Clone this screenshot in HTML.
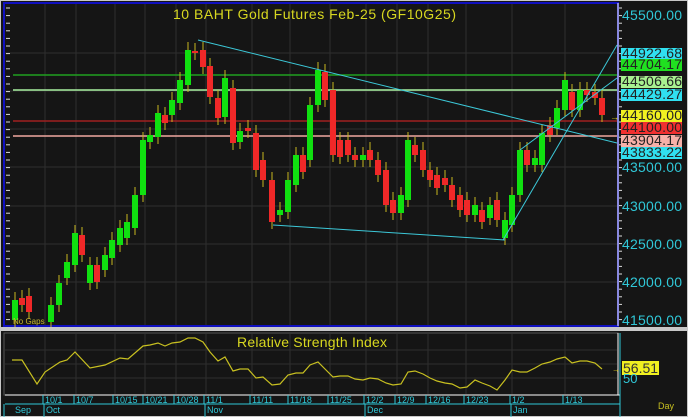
<!DOCTYPE html>
<html><head><style>
body{margin:0;background:#d4d0c8;}
#w{position:relative;width:688px;height:417px;background:#141414;overflow:hidden;font-family:"Liberation Sans",sans-serif;}
svg{position:absolute;left:0;top:0}
</style></head><body><div id="w">
<svg id="s" width="688" height="417" xmlns="http://www.w3.org/2000/svg">
<rect x="0" y="0" width="688" height="417" fill="#151515"/>
<rect x="0.5" y="0.5" width="687" height="416" fill="none" stroke="#c8c8c8"/>
<g id="grid" stroke="#2e2e2e" stroke-width="1"></g>
<rect x="4" y="3" width="614" height="323" fill="none" stroke="#1010c0" stroke-width="2"/>
<line x1="618" y1="3" x2="618" y2="326" stroke="#fff"/>
<g id="hl"></g>
<g id="c"></g>
<g fill="none" stroke="#3cc8d8" stroke-width="1">
<polyline points="198,40 617,143"/>
<polyline points="273,225 505,240"/>
<polyline points="503,240 617,45"/>
<polyline points="520,150 617,78"/>
</g>
<text x="173" y="19" fill="#d8d820" font-size="14" textLength="283" lengthAdjust="spacing">10  BAHT  Gold  Futures  Feb-25  (GF10G25)</text>
<text x="13" y="324" fill="#c8b830" font-size="8">No Gaps</text>
<g font-size="14" fill="#30c8d8">
<text x="622" y="20" textLength="60">45500.00</text>
<text x="622" y="172" textLength="60">43500.00</text>
<text x="622" y="211" textLength="60">43000.00</text>
<text x="622" y="249" textLength="60">42500.00</text>
<text x="622" y="287" textLength="60">42000.00</text>
<text x="622" y="325" textLength="60">41500.00</text>
</g>
<g font-size="14" fill="#222">
<rect x="621" y="48" width="61" height="11" fill="#30e0f0"/><text x="622" y="58" textLength="60">44922.68</text>
<rect x="621" y="59" width="61" height="12" fill="#20e020"/><text x="622" y="69" textLength="60">44704.17</text>
<rect x="621" y="76" width="61" height="12" fill="#a8f090"/><text x="622" y="86" textLength="60">44506.66</text>
<rect x="621" y="89" width="61" height="12" fill="#30e0f0"/><text x="622" y="99" textLength="60">44429.27</text>
<rect x="621" y="110" width="61" height="12" fill="#f0f020"/><text x="622" y="120" textLength="60">44160.00</text>
<rect x="621" y="122" width="61" height="12" fill="#f03030"/><text x="622" y="132" textLength="60">44100.00</text>
<rect x="621" y="135" width="61" height="12" fill="#f8b0a8"/><text x="622" y="145" textLength="60">43904.17</text>
<rect x="621" y="147" width="61" height="12" fill="#30e0f0"/><text x="622" y="157" textLength="60">43833.22</text>
</g>
<text x="610" y="120" fill="#e0d020" font-size="9">→</text>
<rect x="0" y="327" width="688" height="4" fill="#c8c8c8"/>
<rect x="4" y="333" width="614" height="62" fill="none" stroke="#555"/>
<g id="rg" stroke="#2e2e2e"></g>
<line x1="618" y1="333" x2="618" y2="395" stroke="#fff"/>
<text x="237" y="347" fill="#d8d820" font-size="14" textLength="150" lengthAdjust="spacing">Relative  Strength  Index</text>
<polyline id="rsi" fill="none" stroke="#c8c020" stroke-width="1.2" points=""/>
<rect x="622" y="361" width="37" height="14" fill="#f0f020"/>
<text x="623" y="373" fill="#333" font-size="14">56.51</text>
<text x="623" y="383" fill="#30c8d8" font-size="13">50</text>
<text x="612" y="372" fill="#e0d020" font-size="8">→</text>
<line x1="5" y1="395" x2="620" y2="395" stroke="#fff"/>
<line x1="5" y1="404" x2="620" y2="404" stroke="#30c8d8"/>
<line x1="620" y1="333" x2="620" y2="417" stroke="#30c8d8"/>
<g id="dl" font-size="9" fill="#30c8d8"></g>
<text x="658" y="409" fill="#c8c020" font-size="9">Day</text>
</svg>
<script>
const NS="http://www.w3.org/2000/svg";
function el(p,t,a,txt){const e=document.createElementNS(NS,t);for(const k in a)e.setAttribute(k,a[k]);if(txt)e.textContent=txt;document.getElementById(p).appendChild(e);return e;}
const vx=[45,76,115,145,176,206,252,290,330,366,397,428,466,512,565];
vx.forEach(x=>{el('grid','line',{x1:x,y1:4,x2:x,y2:325});el('rg','line',{x1:x,y1:334,x2:x,y2:394});});
[53,91,129,167,206,244,282].forEach(y=>el('grid','line',{x1:5,y1:y,x2:617,y2:y}));
[350,364,378].forEach(y=>el('rg','line',{x1:5,y1:y,x2:617,y2:y}));
for(let y=8;y<325;y+=7.6)el('grid','line',{x1:6,y1:y,x2:10,y2:y,stroke:'#ddd'});
for(let y=8;y<325;y+=7.6)el('grid','line',{x1:618,y1:y,x2:622,y2:y,stroke:'#ddd'});
[[75,'#20a020'],[90,'#a8f0a0'],[121,'#a02020'],[136,'#f0a8a0']].forEach(([y,c])=>el('hl','line',{x1:13,y1:y,x2:617,y2:y,stroke:c,'stroke-width':1.5}));
const d=[[15,'g',300,320],[22,'r',298,305],[29,'r',296,312],[51,'g',305,322],[59,'g',283,305],[67,'g',262,278],[75,'g',233,265],[82,'r',235,255],[90,'g',265,283],[97,'r',265,282],[105,'g',255,270],[112,'g',240,258],[120,'g',228,245],[127,'g',222,238],[135,'g',195,228],[143,'g',140,195],[150,'g',135,142],[158,'g',113,137],[165,'r',115,123],[172,'g',100,115],[180,'g',80,103],[188,'g',50,85],[195,'r',51,53],[203,'r',50,67],[210,'r',66,97],[218,'r',98,118],[225,'g',78,117],[233,'r',88,143],[240,'g',131,142],[248,'r',128,131],[256,'r',133,170],[263,'r',160,180],[272,'r',180,222],[280,'g',210,215],[288,'g',180,212],[296,'g',155,185],[303,'r',155,172],[310,'g',105,160],[318,'g',70,105],[325,'r',72,100],[333,'r',90,155],[340,'r',140,157],[348,'r',140,155],[355,'r',155,160],[363,'g',155,160],[370,'r',150,160],[378,'r',160,175],[386,'r',170,205],[393,'r',200,213],[401,'g',195,213],[408,'g',140,200],[415,'r',145,155],[423,'r',150,170],[430,'r',170,180],[437,'r',175,188],[445,'r',178,185],[452,'r',185,200],[460,'r',195,210],[467,'r',200,215],[475,'g',205,215],[482,'r',210,222],[490,'g',205,218],[497,'r',200,220],[505,'g',220,238],[512,'g',195,225],[520,'g',150,195],[527,'r',150,165],[535,'g',158,165],[542,'g',133,165],[550,'r',125,135],[557,'g',108,128],[565,'g',80,110],[572,'r',92,110],[580,'g',90,110],[587,'r',90,95],[595,'r',92,98],[602,'r',98,115]];
d.forEach(([x,c,a,b])=>{el('c','line',{x1:x,y1:a-8,x2:x,y2:b+7,stroke:'#c8b820'});el('c','rect',{x:x-3,y:a,width:6,height:Math.max(2,b-a),fill:c=='g'?'#10e010':'#f02828'});});
const r=[[12,360],[22,360],[37,384],[45,372],[60,362],[67,360],[75,352],[90,368],[105,365],[120,358],[128,359],[143,346],[150,345],[158,343],[165,346],[172,343],[180,342],[188,338],[195,338],[203,342],[210,352],[218,361],[225,357],[233,371],[240,369],[248,369],[256,378],[263,377],[272,385],[280,384],[288,375],[296,373],[303,373],[310,365],[318,362],[325,369],[333,377],[340,376],[348,376],[355,379],[363,380],[370,378],[378,379],[386,383],[393,385],[401,384],[408,372],[415,371],[423,374],[430,378],[437,381],[445,383],[452,384],[460,388],[467,387],[475,380],[482,383],[490,386],[497,390],[505,380],[512,370],[520,372],[527,372],[535,368],[542,364],[550,362],[557,359],[565,357],[572,363],[580,361],[587,361],[595,363],[602,369]];
document.getElementById('rsi').setAttribute('points',r.map(p=>p.join(',')).join(' '));
const lb=['10/1','10/7','10/15','10/21','10/28','11/1','11/11','11/18','11/25','12/2','12/9','12/16','12/23','1/2','1/13'];
vx.forEach((x,i)=>{el('dl','line',{x1:x-2,y1:395,x2:x-2,y2:404,stroke:'#30c8d8'});el('dl','text',{x:x,y:403},lb[i]);});
[[5,'Sep',15],[45,'Oct',46],[206,'Nov',207],[366,'Dec',367],[512,'Jan',513]].forEach(([x,t,tx])=>{el('dl','line',{x1:x-1,y1:404,x2:x-1,y2:417,stroke:'#30c8d8'});el('dl','text',{x:tx,y:413},t);});
</script>
</div></body></html>
